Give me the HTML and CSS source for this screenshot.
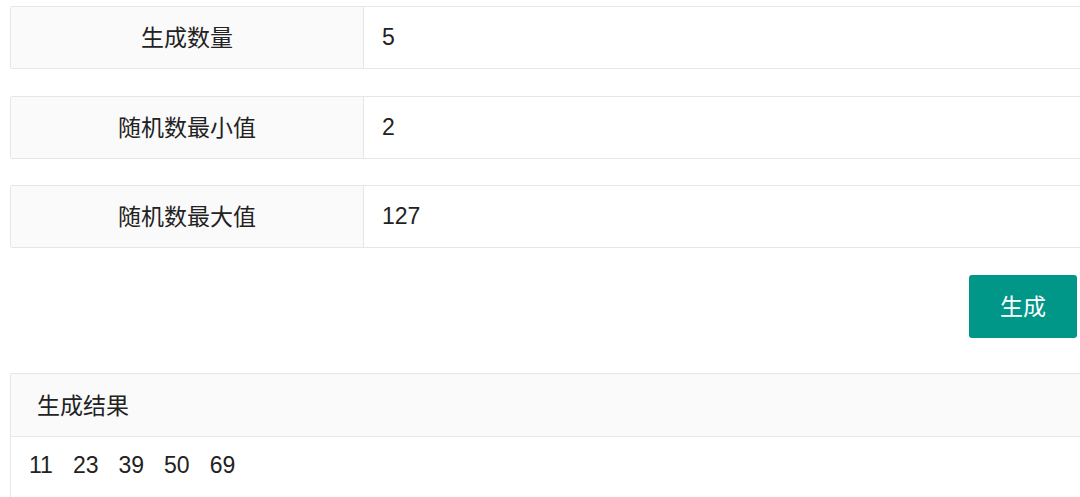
FILE: index.html
```html
<!DOCTYPE html>
<html lang="zh">
<head>
<meta charset="utf-8">
<title>随机数生成</title>
<link rel="stylesheet" href="styles.css">
</head>
<body>
<div class="page">
  <div class="form">
    <div class="row">
      <div class="label">生成数量</div>
      <div class="value">5</div>
    </div>
    <div class="row">
      <div class="label">随机数最小值</div>
      <div class="value">2</div>
    </div>
    <div class="row">
      <div class="label">随机数最大值</div>
      <div class="value">127</div>
    </div>
  </div>
  <div class="actions">
    <button class="btn" type="button">生成</button>
  </div>
  <div class="panel">
    <div class="panel-head">生成结果</div>
    <div class="panel-body">
      <span>11</span><span>23</span><span>39</span><span>50</span><span>69</span>
    </div>
  </div>
</div>
</body>
</html>
```

FILE: styles.css
```css
html, body {
  margin: 0;
  padding: 0;
  background: #ffffff;
  overflow: hidden;
}

body {
  font-family: "Liberation Sans", "Noto Sans CJK SC", sans-serif;
  font-size: 23px;
  color: #222222;
}

.page {
  width: 1110px;
  padding: 6px 0 0 10px;
}

.form {
  display: flex;
  flex-direction: column;
  gap: 26.5px;
}

.row {
  display: flex;
  height: 63px;
  border: 1px solid #e6e6e6;
  border-radius: 2px;
  box-sizing: border-box;
}

.label {
  width: 352px;
  flex: none;
  background: #fafafa;
  border-right: 1px solid #e6e6e6;
  display: flex;
  align-items: center;
  justify-content: center;
  font-family: "Noto Sans CJK SC", sans-serif;
  line-height: 1;
  padding-bottom: 2px;
}

.value {
  flex: 1;
  display: flex;
  align-items: center;
  padding-left: 18px;
}

.actions {
  display: flex;
  justify-content: flex-end;
  width: 1067px;
  padding-top: 27px;
}

.btn {
  width: 108px;
  height: 63px;
  border: none;
  border-radius: 3px;
  background: #009688;
  color: #ffffff;
  font-family: "Noto Sans CJK SC", sans-serif;
  font-size: 23px;
  line-height: 1;
  padding: 0 0 2px 0;
}

.panel {
  margin-top: 35px;
  border: 1px solid #e6e6e6;
  border-bottom: none;
  border-radius: 2px 2px 0 0;
  height: 124px;
  box-sizing: border-box;
}

.panel-head {
  height: 62px;
  background: #fafafa;
  border-bottom: 1px solid #e6e6e6;
  display: flex;
  align-items: center;
  padding-left: 26px;
  font-family: "Noto Sans CJK SC", sans-serif;
  line-height: 1;
  padding-bottom: 2px;
  box-sizing: border-box;
  height: 63px;
}

.panel-body {
  display: flex;
  gap: 20px;
  padding: 14px 0 0 18px;
  line-height: 28px;
}
```
